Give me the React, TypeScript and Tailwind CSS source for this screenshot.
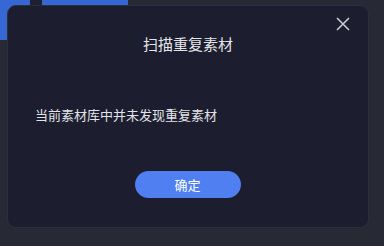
export default function App() {
  return (
    <div
      className="w-[384px] h-[246px] bg-[#272935] relative overflow-hidden"
      style={{ fontFamily: '"Noto Sans CJK SC", "Noto Sans", sans-serif' }}
    >
      <div className="absolute left-0 top-0 w-[128px] h-[40px] bg-[#3568d4]" />
      <div className="absolute left-[30px] top-0 w-[12px] h-[5px] bg-[#1f2133]" />
      <div className="absolute left-[7px] top-[5px] w-[362px] h-[223px] rounded-[9px] bg-[#1c1d2e] border border-[#2c2e3d] flex flex-col">
        <div className="relative h-[76px] flex items-center justify-center">
          <span className="text-[15px] text-[#e4e5ea]">扫描重复素材</span>
          <svg className="absolute right-[18px] top-[11px]" width="14" height="14" viewBox="0 0 14 14">
            <path d="M1 1L13 13M13 1L1 13" stroke="#c9cad2" strokeWidth="1.6" />
          </svg>
        </div>
        <div className="pl-[27px] pt-[23px] text-[13px] text-[#e2e3e8]">当前素材库中并未发现重复素材</div>
        <div className="flex-1" />
        <div className="flex justify-center pb-[29px]">
          <button className="w-[106px] h-[27px] rounded-full bg-[#4f7ff0] text-white text-[13px] mr-[1px]">确定</button>
        </div>
      </div>
    </div>
  );
}
